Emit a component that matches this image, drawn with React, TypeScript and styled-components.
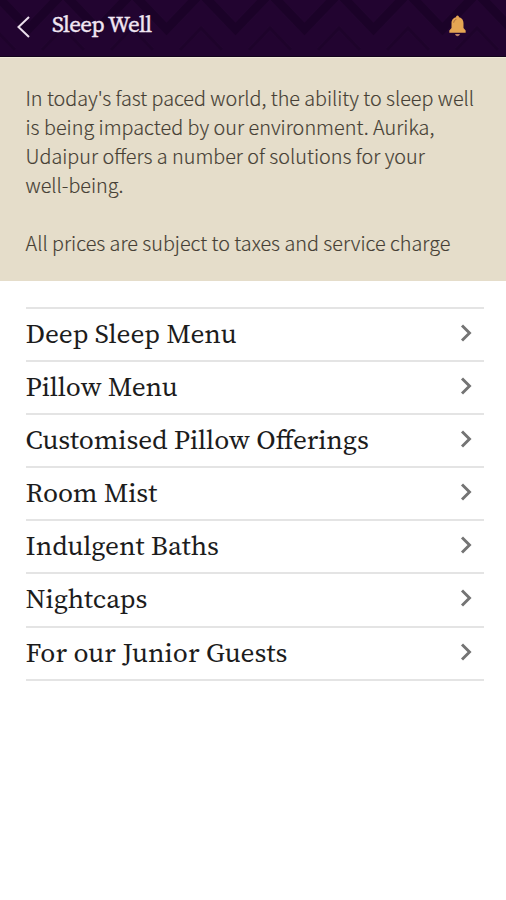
import React from "react";
import styled, { createGlobalStyle } from "styled-components";

const Global = createGlobalStyle`
  * { box-sizing: border-box; }
  body { margin: 0; background: #fff; }
`;

const Screen = styled.div`
  display: flex;
  flex-direction: column;
  width: 506px;
  height: 900px;
  overflow: hidden;
  background: #fff;
`;

const Header = styled.header`
  position: relative;
  flex: none;
  display: flex;
  align-items: flex-start;
  height: 57px;
  background: #220430;
  border-bottom: 1px solid #14041c;
  overflow: hidden;
`;

const Pattern = styled.svg`
  position: absolute;
  inset: 0;
`;

const BackButton = styled.button`
  position: relative;
  display: flex;
  width: 52px;
  padding: 15px 0 0 16px;
  border: 0;
  background: none;
`;

const Title = styled.h1`
  position: relative;
  flex: 1;
  margin: 0;
  padding-top: 9px;
  color: #f1e6f2;
  font: 400 23px/30px "Source Serif 4", "Noto Serif", "Liberation Serif", serif;
  letter-spacing: -0.6px;
  -webkit-text-stroke: 0.4px #f1e6f2;
`;

const BellButton = styled.button`
  position: relative;
  display: flex;
  width: 59px;
  padding: 15px 0 0 1px;
  border: 0;
  background: none;
`;

const Intro = styled.section`
  flex: none;
  height: 224px;
  padding: 25px 25px 0 25.5px;
  background: #e5ddca;
  border-top: 1px solid #f0ead9;
  color: #463f35;
  font: 300 19.8px/29px "Noto Sans CJK SC", sans-serif;
  -webkit-text-stroke: 0.15px #463f35;
`;

const Line = styled.div<{ $spacing?: number }>`
  height: 29px;
  white-space: nowrap;
  letter-spacing: ${(p) => p.$spacing ?? 0}px;
`;

const Menu = styled.nav`
  display: flex;
  flex-direction: column;
  margin: 26px 22px 0 26px;
  border-top: 2px solid #e4e4e4;
`;

const MenuRow = styled.a`
  display: flex;
  align-items: flex-start;
  justify-content: space-between;
  height: 53.1px;
  padding: 7px 11px 0 0;
  border-bottom: 2px solid #e4e4e4;
`;

const Label = styled.span<{ $spacing: number }>`
  margin-left: -0.5px;
  color: #1c1c1c;
  font: 400 27.4px/36px "Source Serif 4", "Noto Serif", "Liberation Serif", serif;
  font-feature-settings: "liga" 1;
  letter-spacing: ${(p) => p.$spacing}px;
  white-space: nowrap;
`;

const Chevron = styled.svg`
  margin-top: 7px;
`;

const items = [
  { label: "Deep Sleep Menu", spacing: -0.05 },
  { label: "Pillow Menu", spacing: -0.15 },
  { label: "Customised Pillow Offerings", spacing: -0.11 },
  { label: "Room Mist", spacing: -0.1 },
  { label: "Indulgent Baths", spacing: -0.03 },
  { label: "Nightcaps", spacing: -0.02 },
  { label: "For our Junior Guests", spacing: 0.06 },
];

const introLines = [
  { text: "In today's fast paced world, the ability to sleep well", spacing: -0.02 },
  { text: "is being impacted by our environment. Aurika,", spacing: 0.02 },
  { text: "Udaipur offers a number of solutions for your", spacing: 0 },
  { text: "well-being.", spacing: 0 },
  { text: "", spacing: 0 },
  { text: "All prices are subject to taxes and service charge", spacing: 0 },
];

export default function App() {
  return (
    <Screen>
      <Global />
      <Header>
        <Pattern width="506" height="57">
          <defs>
            <pattern id="zigzag" width="69" height="80" x="270" y="0" patternUnits="userSpaceOnUse">
              <path d="M-5-13 0-7 34.500 29 69-7 74-13" fill="none" stroke="#1b0228" strokeWidth="9" />
              <path d="M-21 50 0 28 21 50M48 50 69 28 90 50" fill="none" stroke="#1e032b" strokeWidth="3" />
            </pattern>
          </defs>
          <rect width="506" height="57" fill="url(#zigzag)" />
        </Pattern>
        <BackButton aria-label="Back">
          <svg width="16" height="24" viewBox="0 0 16 24" fill="none" stroke="#eadfeb" strokeWidth="2">
            <path d="M13 2 2.500 12 13 22" />
          </svg>
        </BackButton>
        <Title>Sleep Well</Title>
        <BellButton aria-label="Notifications">
          <svg width="19" height="23" viewBox="0 0 20 24">
            <path d="M10 .5c1 0 1.500.8 1.500 1.700 3.600.8 4.800 3.500 4.800 6.500v4.800l2.300 2.700v2.300H1.400v-2.300l2.300-2.700V8.700c0-3 1.200-5.700 4.800-6.500C8.500 1.300 9 .5 10 .5z" fill="#e5a553" />
            <path d="M6 8c.3-2 1.200-3 2.800-3.500" stroke="#a86b3c" fill="none" />
            <path d="M7.500 20h5c-.3 1.500-1.200 2.200-2.500 2.200S7.800 21.500 7.500 20z" fill="#b98067" />
          </svg>
        </BellButton>
      </Header>
      <Intro>
        {introLines.map((line, i) => (
          <Line key={i} $spacing={line.spacing}>{line.text}</Line>
        ))}
      </Intro>
      <Menu>
        {items.map((item) => (
          <MenuRow key={item.label}>
            <Label $spacing={item.spacing}>{item.label}</Label>
            <Chevron width="14" height="20" viewBox="0 0 14 20" fill="none" stroke="#747474" strokeWidth="2.9">
              <path d="M3 2.500 10.500 10 3 17.500" />
            </Chevron>
          </MenuRow>
        ))}
      </Menu>
    </Screen>
  );
}
